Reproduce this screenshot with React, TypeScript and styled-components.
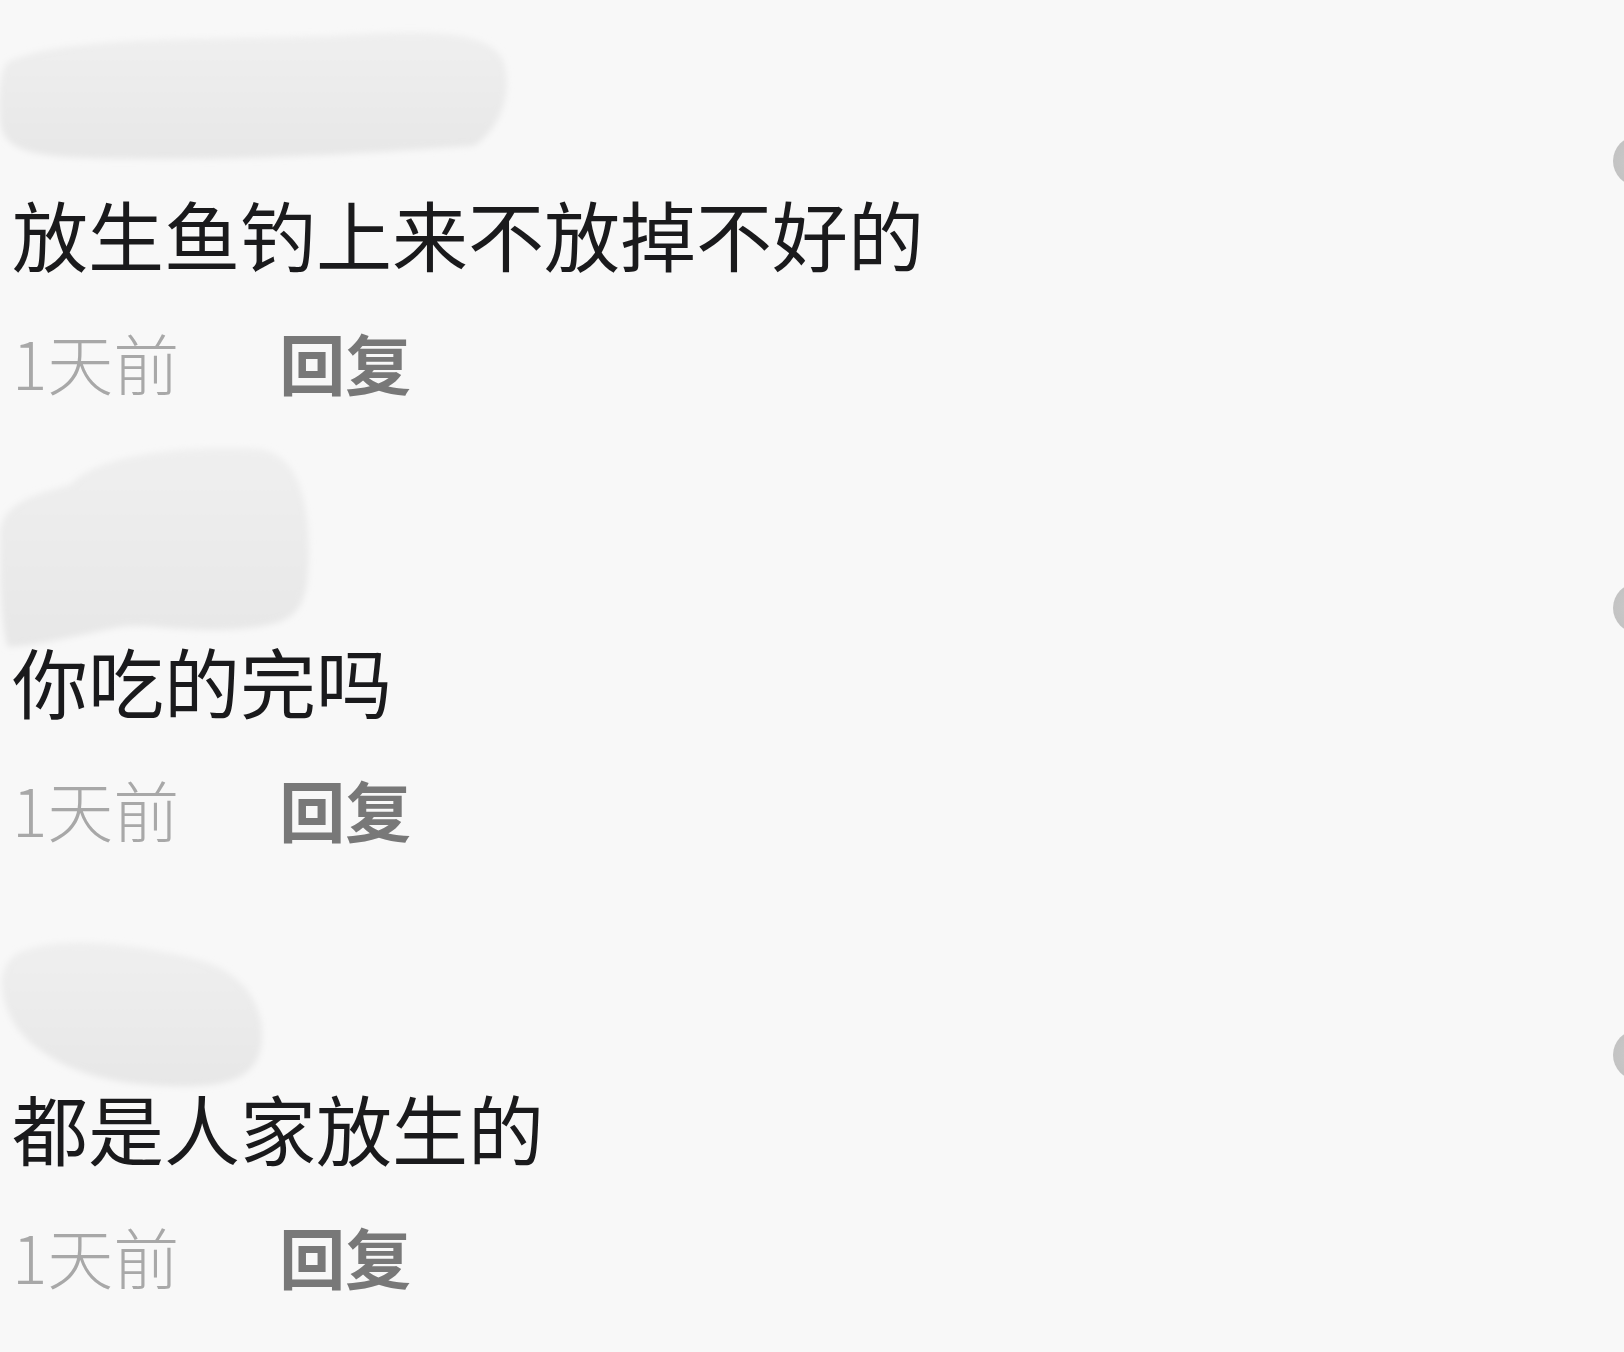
import React from 'react';
import styled, { createGlobalStyle } from 'styled-components';

const GlobalStyle = createGlobalStyle`
  html, body {
    margin: 0;
    padding: 0;
    background: #f8f8f8;
  }
  body {
    font-family: "Noto Sans CJK SC", "Noto Sans", sans-serif;
  }
`;

const Page = styled.div`
  width: 1624px;
  height: 1352px;
  overflow: hidden;
  background: #f8f8f8;
  display: flex;
  flex-direction: column;
`;

const CommentBlock = styled.div`
  display: flex;
  flex-direction: column;
  padding: 0 0 46px 12px;
`;

const CommentHeader = styled.div`
  height: 183px;
  display: flex;
  justify-content: space-between;
  align-items: flex-start;
  margin-left: -12px;
`;

const Smear = styled.svg<{ $top: number }>`
  display: block;
  margin-top: ${(p) => p.$top}px;
  overflow: visible;
`;

const LikeDot = styled.div`
  width: 50px;
  height: 50px;
  margin-top: 136px;
  margin-right: -39px;
  border-radius: 50%;
  background: radial-gradient(circle at 40% 50%, #c9c9c9 0%, #c2c2c2 60%, #d6d6d6 100%);
  filter: blur(0.6px);
  flex-shrink: 0;
`;

const CommentText = styled.div`
  font-size: 76px;
  line-height: 100px;
  color: #1a1a1c;
  white-space: nowrap;
`;

const MetaRow = styled.div`
  margin-top: 38px;
  display: flex;
  align-items: center;
  gap: 100px;
  font-size: 66px;
  line-height: 80px;
`;

const Time = styled.span`
  color: #a8a8a8;
  font-weight: 300;
`;

const Reply = styled.span`
  color: #787878;
  font-weight: 700;
`;

type SmearShape = {
  top: number;
  width: number;
  height: number;
  paths: string[];
};

const smears: SmearShape[] = [
  {
    top: 28,
    width: 512,
    height: 136,
    paths: [
      'M8 34 C 60 8, 200 12, 330 8 C 420 2, 490 0, 504 34 C 514 70, 496 104, 474 118 C 380 124, 250 134, 90 130 C 30 128, 2 122, 0 92 C -2 66, 0 42, 8 34 Z',
    ],
  },
  {
    top: -2,
    width: 316,
    height: 206,
    paths: [
      'M70 40 C 100 6, 200 0, 260 4 C 300 10, 312 60, 308 130 C 304 170, 290 180, 240 184 C 180 188, 150 178, 120 182 C 80 190, 40 200, 8 202 C 0 180, 0 120, 0 90 C 0 60, 30 50, 70 40 Z',
    ],
  },
  {
    top: 44,
    width: 268,
    height: 148,
    paths: [
      'M20 14 C 60 -4, 140 6, 200 22 C 254 38, 268 80, 260 114 C 252 142, 222 150, 170 148 C 110 146, 70 134, 40 112 C 10 92, 0 60, 2 38 C 6 24, 12 18, 20 14 Z',
    ],
  },
];

const comments = [
  { text: '放生鱼钓上来不放掉不好的', time: '1天前' },
  { text: '你吃的完吗', time: '1天前' },
  { text: '都是人家放生的', time: '1天前' },
];

function NameSmear({ shape, id }: { shape: SmearShape; id: string }) {
  return (
    <Smear $top={shape.top} width={shape.width} height={shape.height} viewBox={`0 0 ${shape.width} ${shape.height}`}>
      <defs>
        <filter id={id} x="-10%" y="-10%" width="120%" height="120%">
          <feGaussianBlur stdDeviation="3" />
        </filter>
        <linearGradient id={`${id}-fill`} x1="0" y1="0" x2="0" y2="1">
          <stop offset="0%" stopColor="#efefef" />
          <stop offset="100%" stopColor="#e7e7e7" />
        </linearGradient>
      </defs>
      {shape.paths.map((d, i) => (
        <path key={i} d={d} fill={`url(#${id}-fill)`} filter={`url(#${id})`} />
      ))}
    </Smear>
  );
}

export default function App() {
  return (
    <>
      <GlobalStyle />
      <Page>
        {comments.map((c, index) => (
          <CommentBlock key={index}>
            <CommentHeader>
              <NameSmear shape={smears[index]} id={`smear-${index}`} />
              <LikeDot />
            </CommentHeader>
            <CommentText>{c.text}</CommentText>
            <MetaRow>
              <Time>{c.time}</Time>
              <Reply>回复</Reply>
            </MetaRow>
          </CommentBlock>
        ))}
      </Page>
    </>
  );
}
